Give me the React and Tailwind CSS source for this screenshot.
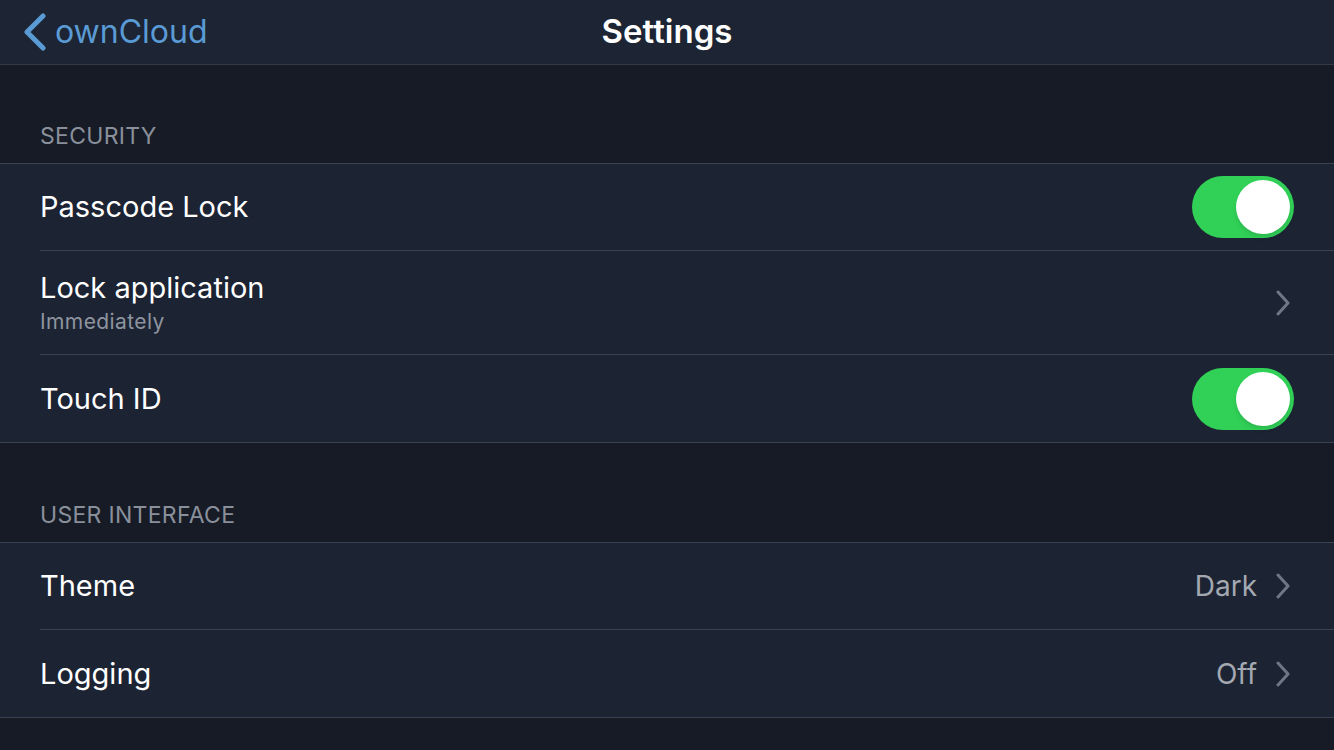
const Toggle = ({ on }) => (
  <div className={`w-[102px] h-[62px] rounded-full p-[4px] flex ${on ? "bg-[#31d158] justify-end" : "bg-[#3a4250] justify-start"}`}>
    <div className="w-[54px] h-[54px] rounded-full bg-white shadow-md"></div>
  </div>
);

// thin iOS style disclosure chevron
const Chevron = () => (
  <svg width="16" height="26" viewBox="0 0 16 26" className="shrink-0">
    <polyline points="3,2 13,13 3,24" fill="none" stroke="#6f7785" strokeWidth="3" strokeLinecap="round" strokeLinejoin="round" />
  </svg>
);

const SectionHeader = ({ title, height }) => (
  <div className={`${height} flex items-end px-[40px] pb-[10px]`}>
    <span className="text-[23px] uppercase text-[#8a909b] tracking-[0.3px]">{title}</span>
  </div>
);

const Row = ({ title, subtitle, value, toggle, chevron, last }) => (
  <div className="pl-[40px]">
    <div className={`flex items-center ${chevron ? "pr-[43px]" : "pr-[40px]"} ${subtitle ? "h-[104px]" : "h-[87px]"} ${last ? "" : "border-b border-[#3b4352]"}`}>
      <div className="flex-1 flex flex-col">
        <span className="text-[29px] text-white leading-[36px]">{title}</span>
        {subtitle && <span className="text-[21px] text-[#8e949e] leading-[26px] mt-[3px] tracking-[0.4px]">{subtitle}</span>}
      </div>
      {value && <span className="text-[28px] text-[#a3a8b1] mr-[18px]">{value}</span>}
      {toggle !== undefined && <Toggle on={toggle} />}
      {chevron && <Chevron />}
    </div>
  </div>
);

const Group = ({ children }) => (
  <div className="bg-[#1c2333] border-y border-[#3b4352]">{children}</div>
);

export default function App() {
  return (
    <div className="w-[1334px] h-[750px] overflow-hidden bg-[#161b26] font-['Inter','Roboto',sans-serif]">
      {/* nav bar */}
      <div className="h-[65px] bg-[#1d2534] border-b border-[#323a48] flex items-center relative">
        <div className="flex items-center pl-[22px] text-[#5a9bd6]">
          <svg width="26" height="38" viewBox="0 0 26 38">
            <polyline points="21,3 5,19 21,35" fill="none" stroke="#5a9bd6" strokeWidth="5" strokeLinecap="round" strokeLinejoin="round" />
          </svg>
          <span className="text-[32px] ml-[7px]">ownCloud</span>
        </div>
        <div className="absolute left-0 right-0 text-center text-white font-semibold text-[33px] pointer-events-none">
          Settings
        </div>
      </div>

      <SectionHeader title="Security" height="h-[98px]" />
      <Group>
        <Row title="Passcode Lock" toggle={true} />
        <Row title="Lock application" subtitle="Immediately" chevron />
        <Row title="Touch ID" toggle={true} last />
      </Group>

      <SectionHeader title="User Interface" height="h-[99px]" />
      <Group>
        <Row title="Theme" value="Dark" chevron />
        <Row title="Logging" value="Off" chevron last />
      </Group>
    </div>
  );
}
